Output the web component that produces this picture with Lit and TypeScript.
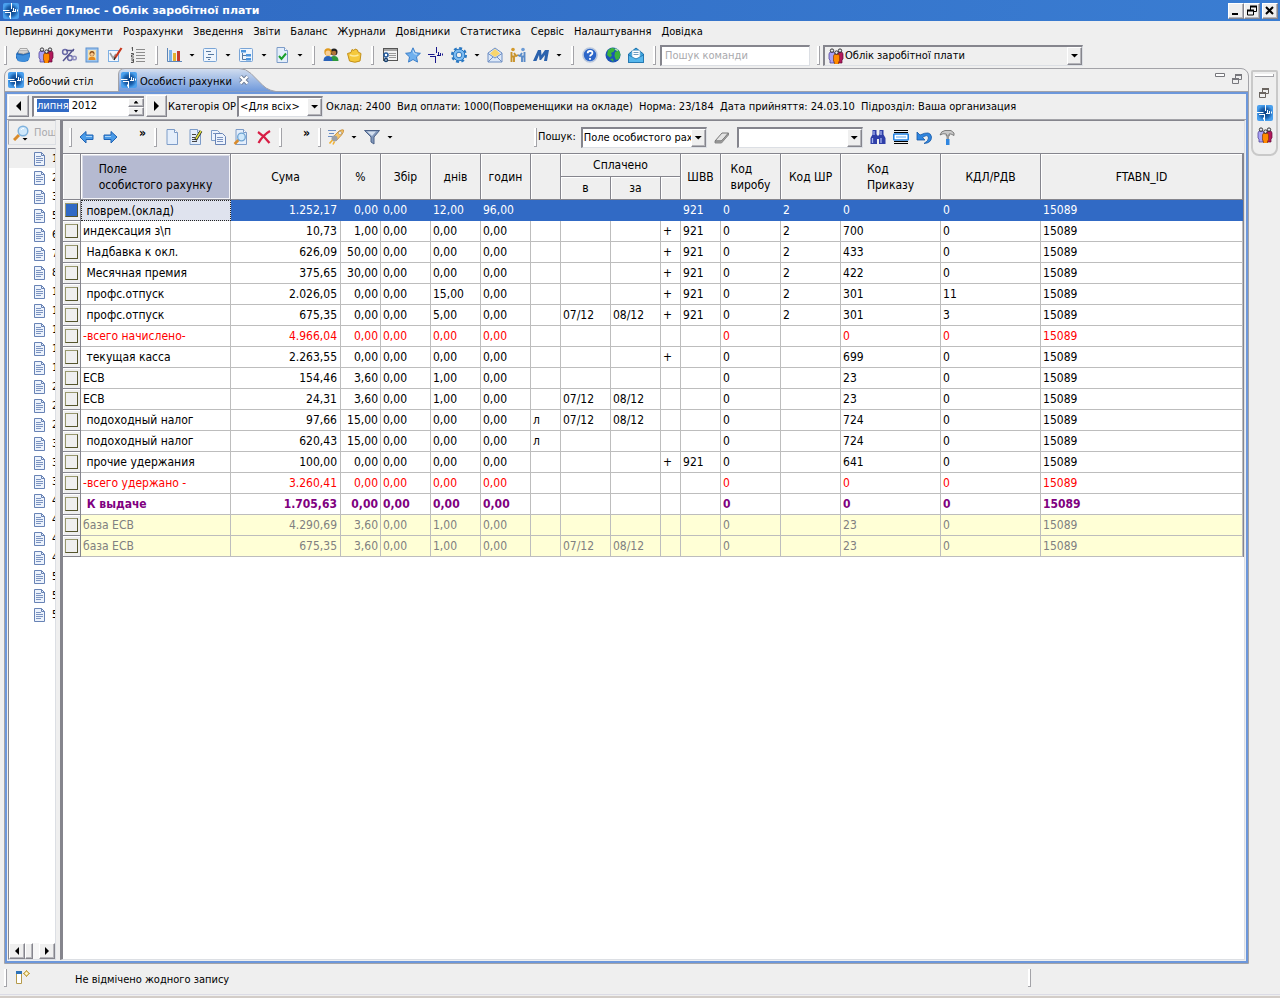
import { LitElement, html, svg, css, nothing } from "lit";
import { customElement, property, query } from "lit/decorators.js";
import { classMap } from "lit/directives/class-map.js";

const person = (x: number, y: number, c: string, d: string) => svg`
  <path d="M${x} ${y + 5}q0-2 2.5-2h1q2.5 0 2.5 2v5l-1 1v3h-4v-3l-1-1z" fill=${c} stroke=${d} stroke-width=".7"/>
  <circle cx=${x + 3} cy=${y + 1.6} r="1.7" fill="#e8e8f0" stroke="#222" stroke-width=".9"/>`;

const page = svg`<path d="M3 .5h7.5l3 3v12H3z" fill="#e4eefb" stroke="#7d9cc8"/><path d="M10.5.5v3h3" fill="#fff" stroke="#7d9cc8"/>`;

const glyphs: Record<string, unknown> = {
  logo: svg`<defs><radialGradient id="lg"><stop offset="0" stop-color="#0d3f80"/><stop offset=".6" stop-color="#1c61ad"/><stop offset="1" stop-color="#4aa0ee"/></radialGradient></defs>
    <rect width="16" height="16" rx="2" fill="url(#lg)"/>
    <path d="M8.500 0v6M0 7.500h6.500M2 9.500h5M7.500 9v7M10.500 5v4M9 8.500h4M12.500 6v2M14.500 6.500v2M6.500 12.500v2" stroke="#fff" fill="none"/>`,
  box: svg`<path d="M1 7l3-4h9l2 3v3l-2 5-4 1-6-1-2-3z" fill="#1f68b8"/><path d="M1 7.500l7 1 7-2-1 6-5 2.500-6-1z" fill="#3f8fdc"/><path d="M3 6l2-4.500h7l1.500 4-5 1.500z" fill="#e9e9e9" stroke="#8a8a8a" stroke-width=".7"/><path d="M5 3.500h7M4.500 5h8" stroke="#999" stroke-width=".6"/>`,
  people: svg`${person(1, 1, "#a9a3f5", "#43308e")}${person(9, 1, "#b3195b", "#5e0a3a")}${person(5.5, 3, "#ff8a00", "#8b3b00")}`,
  percent: svg`<g fill="none" stroke-width="1.500"><circle cx="4" cy="5" r="2.400" stroke="#6a6aa8"/><circle cx="9" cy="11" r="2.400" stroke="#6a6aa8"/><circle cx="13.500" cy="11" r="1.800" stroke="#8f8fc0"/><path d="M2 14L13 2M5 3.500h8" stroke="#55558f"/></g>`,
  badge: svg`<rect x="2" y="1" width="12" height="14" fill="#9cc3ec" stroke="#5d92cf"/><rect x="4" y="3" width="8" height="10" fill="#f4e2b0"/><circle cx="8" cy="6.500" r="2.500" fill="#8b4a14"/><circle cx="8" cy="7.300" r="1.700" fill="#f7c68a"/><path d="M4.500 13q0-3.500 3.500-3.500t3.500 3.500z" fill="#e58b1f"/>`,
  checkEdit: svg`<rect x="1.500" y="3.500" width="10" height="11" fill="#f4f8fd" stroke="#7db0e4"/><path d="M3 6l3 5 3-4" fill="none" stroke="#9a9a9a" stroke-width="1.600"/><path d="M14.500 1L8 11" stroke="#c8371c" stroke-width="2.200"/><path d="M8.300 10.400L7 13" stroke="#222" stroke-width="1.400"/>`,
  list: svg`<path d="M6 2.500h9M6 5.500h9M6 8.500h9M6 11.500h9M6 14.500h9" stroke="#8c8c8c"/><path d="M2.500 0v4M1.500 1h1M1 6.500h2.500v1.500h-2v2H4M1 12h2.500v3.500H1M1.500 13.700h2" stroke="#555" fill="none"/>`,
  chart: svg`<path d="M1.500 1v13.500H16" stroke="#5d86b8" fill="none"/><rect x="3" y="3" width="3" height="11" fill="#7db4ea"/><rect x="7" y="6" width="3" height="8" fill="#e3b12e"/><rect x="11" y="4" width="3" height="10" fill="#c43a2c"/>`,
  form: svg`<rect x="1.500" y="1.500" width="13" height="13" rx="1" fill="#eef5fd" stroke="#7aa5d6"/><path d="M4 4.500h5M6 7.500h6M4 10.500h5M6 12.500h2" stroke="#56789f"/>`,
  tree: svg`<rect x="1.500" y="1.500" width="13" height="13" rx="1" fill="#eef5fd" stroke="#7aa5d6"/><path d="M4.500 6v6.500H8M4.500 8.500H8" stroke="#56789f" fill="none"/><rect x="3" y="3" width="5" height="2.500" fill="#4b94dd"/><rect x="8" y="7" width="5" height="2.500" fill="#4b94dd"/><rect x="8" y="11" width="5" height="2.500" fill="#4b94dd"/>`,
  docCheck: svg`${page}<path d="M5 9l2.500 3L12 6.500" stroke="#19a02b" stroke-width="2" fill="none"/>`,
  users: svg`<circle cx="11" cy="5" r="3.500" fill="#222"/><circle cx="11" cy="6" r="2.300" fill="#b0753a"/><path d="M6.500 14q0-5 4.500-5t4.500 5z" fill="#2d9a3c"/><circle cx="5" cy="5" r="3.700" fill="#e09a1f"/><circle cx="5" cy="6" r="2.500" fill="#f8cf96"/><path d="M.5 14q0-5 4.500-5t4.500 5z" fill="#2a62b8"/>`,
  folder: svg`<path d="M1.500 6.500l3.500-1 1-3 2 1 1-1.500 2.500 1 .5 2 3 1.500-1 7.500q-5 2.500-10.500 0z" fill="#f5c93c" stroke="#c3901a"/><path d="M4 8q4 2 8.500 0" stroke="#fdeb9c" stroke-width="1.500" fill="none"/>`,
  gridCfg: svg`<rect x="1.500" y="1.500" width="14" height="12" fill="#f2f2f2" stroke="#555"/><path d="M2 3h13" stroke="#555" stroke-width="1"/><path d="M7 6.500h7M7 8.500h7M7 10.500h7" stroke="#999"/><circle cx="4" cy="8" r="2" fill="#fff" stroke="#245a9c" stroke-width="1.600"/><circle cx="4" cy="13" r="1.500" fill="#fff" stroke="#17406f" stroke-width="1.400"/>`,
  star: svg`<path d="M8 .8l2.200 4.900 5.200.6-3.900 3.600 1 5.200L8 12.500l-4.500 2.600 1-5.200L.6 6.300l5.200-.6z" fill="#6fb0ee" stroke="#3c7fc9"/><path d="M8 3.500l1.300 3.300L12 7.200" stroke="#cbe4fb" fill="none"/>`,
  cross: svg`<path d="M8.500 0v6M0 7.500h6.500M2 9.500h5M7.500 9v7M10.500 5v4M9 8.500h4M12.500 6v2M14.500 6.500v2" stroke="#000080" fill="none" stroke-width=".9"/>`,
  gear: svg`<circle cx="8" cy="8" r="6.800" fill="none" stroke="#2a78c2" stroke-width="2.400" stroke-dasharray="2.900 2.440"/><circle cx="8" cy="8" r="5.800" fill="#7fbdf2" stroke="#2a78c2"/><circle cx="8" cy="8" r="2.800" fill="#f0f0f0" stroke="#2a78c2"/>`,
  mail: svg`<path d="M1 6l7-5 7 5v9H1z" fill="#dce8f8" stroke="#6e8fc4"/><path d="M3 6.500L8 2l5 4.500L8 10z" fill="#f8d56b"/><path d="M1 6.500l7 4.500 7-4.500M1 15l5-5M15 15l-5-5" stroke="#6e8fc4" fill="none"/>`,
  hands: svg`<circle cx="3" cy="2.500" r="1.800" fill="#d49a2c"/><path d="M1.500 5v10M4 6l2 3 2-1M1.500 9.500H4V15" fill="none" stroke="#c8922a" stroke-width="1.900"/><circle cx="13" cy="2.500" r="1.800" fill="#6b9bd6"/><path d="M14.500 5v10M12 6l-2 3-2-1M14.500 9.500H12V15" fill="none" stroke="#5a8bc8" stroke-width="1.900"/>`,
  em: svg`<path d="M0 14L5 3h3l.5 5L12 3h4l-2 11h-3l1-6-4 5H6.500L6 8l-2.500 6z" fill="#2b62ad"/>`,
  help: svg`<circle cx="8" cy="8" r="7" fill="#2c66c9" stroke="#b9c7dd" stroke-width="1.600"/><path d="M5.700 6.300q0-2.300 2.400-2.300t2.300 2q0 1.300-1.300 1.900-1 .5-1 1.500M8 11v1.800" stroke="#fff" stroke-width="1.800" fill="none"/>`,
  globe: svg`<circle cx="8" cy="8" r="7.500" fill="#1c54b5"/><path d="M3 3l4-2.300 3 1L9 4.500 6 6l1 2.500-2 2L2 8zM10 5l4-1.500 1.500 4L14 12l-3 1-1.500-4zM5 12l3-.5.500 3.500z" fill="#3bb53b"/><path d="M10 2l3 1.500" stroke="#a8e8a8" stroke-width="1.500"/>`,
  mailBlue: svg`<path d="M.5 7L8 1l7.500 6v8.500H.5z" fill="#3aa0dc" stroke="#1c6fa8"/><rect x="4" y="3.500" width="8" height="8" fill="#fff" stroke="#8fb9d6" stroke-width=".7"/><path d="M5.500 5.500h5M5.500 7.500h5" stroke="#6f9cc0"/><path d="M.5 8L8 12l7.500-4v7.500H.5z" fill="#55b6ec" stroke="#1c6fa8" stroke-width=".7"/>`,
  search: svg`<path d="M1 15l5-5" stroke="#d98b2b" stroke-width="3"/><circle cx="10" cy="6" r="4.800" fill="#cfe8fb" stroke="#7fb2dd" stroke-width="1.500"/><path d="M8 5q1-2 3-1.500" stroke="#fff" fill="none"/>`,
  doc: svg`<path d="M2.500 1.500h7l3 3v10h-10z" fill="#edf3fc" stroke="#6883b5"/><path d="M9.500 1.500v3h3" fill="none" stroke="#6883b5"/><path d="M4 5.500h5M4 7.500h7M4 9.500h7M4 11.500h5" stroke="#7b93c0"/>`,
  back: svg`<path d="M1 8l6-5.500v3.500h7v4.500H7V14z" fill="#4a9be8" stroke="#1f62b3" stroke-linejoin="round"/><path d="M7 7.500h6" stroke="#a9d4fa"/>`,
  next: svg`<path d="M15 8L9 2.500V6H2v4.500h7V14z" fill="#4a9be8" stroke="#1f62b3" stroke-linejoin="round"/><path d="M3 7.500h6" stroke="#a9d4fa"/>`,
  blank: page,
  edit: svg`${page}<path d="M5 5.500h4M5 8.500h3M5 10.500h3M5 12.500h5" stroke="#444"/><path d="M14 2L8.500 11" stroke="#222" stroke-width="3"/><path d="M14 2L9 10" stroke="#dfe03a" stroke-width="1.500"/>`,
  copy: svg`<path d="M1.500 1.500h6l2 2v8h-8z" fill="#edf3fc" stroke="#7d9cc8"/><path d="M5.500 4.500h7l3 3v8h-10z" fill="#edf3fc" stroke="#6883b5"/><path d="M7 8.500h6M7 10.500h6M7 12.500h6M3 4.500h3" stroke="#7b93c0"/>`,
  preview: svg`${page}<path d="M1.500 15l4-4" stroke="#d98b2b" stroke-width="2.500"/><circle cx="8.500" cy="8" r="3.800" fill="#cfe8fb" stroke="#6da3d2" stroke-width="1.300"/>`,
  del: svg`<path d="M2 3q6 4 11.500 11M14 2Q7 6 2.500 14" stroke="#d81e45" stroke-width="2.200" fill="none"/>`,
  rocket: svg`<path d="M0 1.500h8M1 4.500h5M0 7.500h5" stroke="#6c8fc4"/><path d="M5 8L11 2q4-2 4.500-1 .5 2-2 5L8 12z" fill="#f6c66a" stroke="#c4842a" stroke-width=".8"/><circle cx="12" cy="4" r="1.500" fill="#fff" stroke="#888" stroke-width=".6"/><circle cx="6.500" cy="9.500" r="3" fill="#9aa0aa"/><path d="M4.500 11l-3 3.500M6.500 12.500L5 15.500" stroke="#f0b030" stroke-width="1.600"/>`,
  funnel: svg`<path d="M.5 1.500h15L10 8v7l-3-2V8z" fill="#8298bb" stroke="#4c6288"/><path d="M3 2.500h9L8 7z" fill="#d4dfee"/>`,
  eraser: svg`<path d="M1 12l7-8h6.500l-7 8z" fill="#e3e3e3" stroke="#777"/><path d="M1 12v2h6.500l7-8V4l-7 8z" fill="#a8a8a8" stroke="#777" stroke-width=".8"/>`,
  binoc: svg`<path d="M2.500 1h4v4l.7 1.500h1.600L9.500 5V1h4v4.500l2 3.500v6H9v-5H7v5H.5V9l2-3.500z" fill="#2f3fa8"/><path d="M4 2v4M11 2v4M2.500 9v5M11 9v5" stroke="#a6b3f0" stroke-width="1.300"/>`,
  rows: svg`<path d="M1 1.500h14M1 3.500h14M1 12.500h14M1 14.500h14" stroke="#000"/><rect x=".75" y="5" width="14.500" height="6" rx="1" fill="#fff" stroke="#1f7fe0" stroke-width="1.600"/><rect x="3" y="7" width="10" height="2" fill="#a9d2fa"/>`,
  undo: svg`<path d="M1 3v8h8L6.500 8.500Q12 4.500 12.500 9q0 3-4.500 5.500 7.500-.5 7.500-6.500Q14.500 1 4 6z" fill="#2f86e0" stroke="#1557a6" stroke-width=".8"/>`,
  hammer: svg`<path d="M1 6q1-4 5-4.500h6l3 2.500v2.500L12 5h-2l.3 2h-3V5Q4 4 1 6z" fill="#c9c9c9" stroke="#666" stroke-width=".8"/><path d="M7.500 7h2.500v3H7.500z" fill="#999"/><path d="M7 10h3.500v6H7z" fill="#2f86e0"/>`,
  view: svg`<path d="M1.500 5v9.500h5V5" fill="#fff" stroke="#b59a4b"/><path d="M1 3.500h6" stroke="#2f73b8" stroke-width="3"/><path d="M11.500 1.500l1.200 1.800 1.800 1.200-1.800 1.200-1.200 1.800-1.200-1.800L8.500 4.500l1.800-1.200z" fill="#fff6c8" stroke="#b58a14"/>`,
  restore: svg`<path d="M3.500 2v4.500h6V2M.5 6v4.500h6V6" fill="none" stroke="currentColor"/><path d="M3 2h7M0 6h7" stroke="currentColor" stroke-width="2"/>`,
};

@customElement("ui-icon")
class UiIcon extends LitElement {
  @property() name = "";
  static styles = css`
    :host { display: block; flex: none; width: 16px; height: 16px; }
    svg { display: block; width: 100%; height: 100%; }
  `;
  render() {
    return html`<svg viewBox="0 0 16 16" aria-hidden="true">${glyphs[this.name]}</svg>`;
  }
}

type Row = { c: string[]; kind?: string };
const rows: Row[] = [
  { kind: "sel", c: [" поврем.(оклад)", "1.252,17", "0,00", "0,00", "12,00", "96,00", "", "", "", "", "921", "0", "2", "0", "0"] },
  { c: ["индексация з\\п", "10,73", "1,00", "0,00", "0,00", "0,00", "", "", "", "+", "921", "0", "2", "700", "0"] },
  { c: [" Надбавка к окл.", "626,09", "50,00", "0,00", "0,00", "0,00", "", "", "", "+", "921", "0", "2", "433", "0"] },
  { c: [" Месячная премия", "375,65", "30,00", "0,00", "0,00", "0,00", "", "", "", "+", "921", "0", "2", "422", "0"] },
  { c: [" профс.отпуск", "2.026,05", "0,00", "0,00", "15,00", "0,00", "", "", "", "+", "921", "0", "2", "301", "11"] },
  { c: [" профс.отпуск", "675,35", "0,00", "0,00", "5,00", "0,00", "", "07/12", "08/12", "+", "921", "0", "2", "301", "3"] },
  { kind: "red", c: ["-всего начислено-", "4.966,04", "0,00", "0,00", "0,00", "0,00", "", "", "", "", "", "0", "", "0", "0"] },
  { c: [" текущая касса", "2.263,55", "0,00", "0,00", "0,00", "0,00", "", "", "", "+", "", "0", "", "699", "0"] },
  { c: ["ЕСВ", "154,46", "3,60", "0,00", "1,00", "0,00", "", "", "", "", "", "0", "", "23", "0"] },
  { c: ["ЕСВ", "24,31", "3,60", "0,00", "1,00", "0,00", "", "07/12", "08/12", "", "", "0", "", "23", "0"] },
  { c: [" подоходный налог", "97,66", "15,00", "0,00", "0,00", "0,00", "л", "07/12", "08/12", "", "", "0", "", "724", "0"] },
  { c: [" подоходный налог", "620,43", "15,00", "0,00", "0,00", "0,00", "л", "", "", "", "", "0", "", "724", "0"] },
  { c: [" прочие удержания", "100,00", "0,00", "0,00", "0,00", "0,00", "", "", "", "+", "921", "0", "", "641", "0"] },
  { kind: "red", c: ["-всего удержано -", "3.260,41", "0,00", "0,00", "0,00", "0,00", "", "", "", "", "", "0", "", "0", "0"] },
  { kind: "total", c: [" К выдаче", "1.705,63", "0,00", "0,00", "0,00", "0,00", "", "", "", "", "", "0", "", "0", "0"] },
  { kind: "base", c: ["база ЕСВ", "4.290,69", "3,60", "0,00", "1,00", "0,00", "", "", "", "", "", "0", "", "23", "0"] },
  { kind: "base", c: ["база ЕСВ", "675,35", "3,60", "0,00", "1,00", "0,00", "", "07/12", "08/12", "", "", "0", "", "23", "0"] },
];

const menu = ["Первинні документи", "Розрахунки", "Зведення", "Звіти", "Баланс", "Журнали", "Довідники", "Статистика", "Сервіс", "Налаштування", "Довідка"];
const tools: string[][] = [
  ["box", "people", "percent", "badge", "checkEdit", "list"],
  ["chart+", "form+", "tree+", "docCheck+"],
  ["users", "folder"],
  ["gridCfg", "star", "cross", "gear+", "mail", "hands", "em+"],
  ["help", "globe", "mailBlue"],
];
const accounts = "1235678111112223334444555".split("");
const widths = [18, 150, 110, 40, 50, 50, 50, 30, 50, 50, 20, 40, 60, 60, 100, 100];

const tool = (spec: string) => {
  const drop = spec.endsWith("+");
  const name = drop ? spec.slice(0, -1) : spec;
  return html`<button class="tool" aria-label=${name}><ui-icon name=${name}></ui-icon>${drop ? html`<i class="drop"></i>` : nothing}</button>`;
};
const head = (a: string, b = "") => html`<span class="cap">${a}${b ? html`<br />${b}` : nothing}</span>`;

@customElement("app-root")
class AppRoot extends LitElement {
  @query(".period") period!: HTMLInputElement;

  firstUpdated() {
    this.period.focus();
    this.period.setSelectionRange(0, 5);
  }

  static styles = css`
    :host {
      display: flex; flex-direction: column; height: 100vh; overflow: hidden;
      background: #efefef; color: #000;
      font: 11px/14px "DejaVu Sans Condensed", "DejaVu Sans", sans-serif;
      --edge: #85858d; --line: #a3a3a8; --blue: #6c97db;
    }
    * { box-sizing: border-box; }
    button, input, select { font: inherit; color: inherit; margin: 0; padding: 0; border: 0; border-radius: 0; background: none; outline: none; }
    select { appearance: none; }
    button { display: flex; align-items: center; justify-content: center; }
    .title { display: flex; align-items: center; flex: none; height: 21px; padding: 0 2px 0 3px; color: #fff; background: linear-gradient(90deg, #2f69c2, #3a7dd2); }
    .title h1 { flex: 1; margin: 0 0 0 4px; font: bold 11px/14px "DejaVu Sans", sans-serif; }
    .raised { background: #efefef; border: 1px solid; border-color: #fff var(--edge) var(--edge) #fff; box-shadow: inset -1px -1px 0 #b5b5ba; }
    .win { width: 16px; height: 16px; color: #000; }
    .win.last { margin-left: 2px; }
    .win svg { width: 12px; height: 12px; }
    .menu { display: flex; flex: none; gap: 10px; height: 21px; padding: 0 5px; align-items: center; }
    .menu button { white-space: nowrap; }
    .bar { display: flex; align-items: center; }
    .main-bar { flex: none; height: 26px; padding-left: 4px; }
    .group { display: flex; align-items: center; gap: 7px; padding-right: 9px; }
    .grip { flex: none; width: 3px; height: 19px; border: solid var(--line); border-width: 0 1px 1px 0; background: #fff; }
    .group .grip { margin-right: 1px; }
    .tool { gap: 7px; flex: none; }
    .drop { width: 6px; height: 3px; background: #000; clip-path: polygon(0 0, 100% 0, 50% 100%); }
    .sunk { display: flex; align-items: center; height: 21px; background: #fff; border: solid; border-width: 2px 1px 1px 2px; border-color: var(--edge) #dcdfe4 #dcdfe4 var(--edge); }
    .sunk > input, .sunk > select { flex: 1; min-width: 0; height: 100%; padding-left: 3px; }
    .sunk > select { overflow: hidden; padding-left: 1px; }
    .sunk > .raised { flex: none; width: 15px; height: 100%; }
    .cmd { width: 150px; margin: 0 7px 0 4px; }
    .cmd input::placeholder { color: #a9a9ad; opacity: 1; }
    .persp { width: 260px; margin-left: 3px; padding-left: 3px; background: #efefef; }
    .main { display: flex; flex: 1; min-height: 0; gap: 2px; padding: 0 2px 0 4px; }
    .folder { display: flex; flex-direction: column; flex: 1; min-width: 0; border: 1px solid var(--line); border-radius: 8px 8px 0 0; }
    .tabs { display: flex; flex: none; height: 23px; border-bottom: 1px solid var(--line); }
    .tab { position: relative; display: flex; align-items: center; gap: 3px; height: 22px; padding-left: 3px; }
    .tab span { padding-top: 3px; }
    .tab.idle { width: 113px; }
    .tab.on { width: 165px; }
    .tab.on > svg.shape { position: absolute; left: 0; top: -1px; width: 165px; height: 24px; }
    .tab.on > ui-icon, .tab.on > span, .tab.on > button { position: relative; }
    .tab .x { width: 12px; height: 12px; margin-left: 3px; }
    .tab-tools { display: flex; gap: 5px; margin-left: auto; padding: 4px 4px 0 0; color: #77777c; }
    .tab-tools button { height: 12px; align-items: flex-start; }
    .tab-tools svg { width: 12px; height: 12px; }
    .body { display: flex; flex-direction: column; flex: 1; min-height: 0; border: 2px solid var(--blue); }
    .filter { flex: none; height: 26px; padding: 0 0 1px 1px; border-bottom: 1px solid var(--line); white-space: pre; }
    .step { width: 21px; height: 22px; }
    .spin { width: 112px; margin: 0 2px 0 3px; border-right-width: 0; }
    .period::selection { background: #316ac5; color: #fff; }
    .period { padding-bottom: 2px; }
    .ud { display: flex; flex-direction: column; flex: none; width: 16px; height: 100%; background: #efefef; }
    .ud .raised { flex: 1; width: 100%; }
    .left, .right { width: 5px; height: 10px; background: #000; }
    .left { clip-path: polygon(100% 0, 100% 100%, 0 50%); }
    .right { clip-path: polygon(0 0, 0 100%, 100% 50%); }
    .up { width: 5px; height: 3px; background: #000; clip-path: polygon(50% 0, 100% 100%, 0 100%); }
    .dn { width: 8px; height: 4px; background: #000; clip-path: polygon(0 0, 100% 0, 50% 100%); }
    .dn.s { width: 5px; height: 3px; }
    .cat { width: 86px; margin: 0 3px 0 1px; }
    .filter label, .filter > span { padding-top: 2px; }
    .filter label { margin-left: 1px; }
    .split { display: flex; flex: 1; min-height: 0; gap: 4px; padding: 0 1px 1px; }
    .side { display: flex; flex-direction: column; flex: none; width: 48px; }
    .find { display: flex; flex: none; height: 25px; padding-left: 4px; gap: 2px; align-items: center; overflow: hidden; border: 1px solid var(--line); border-color: var(--line) #dcdfe4 #dcdfe4 var(--line); color: #a9a9ad; }
    .find label { position: relative; flex: none; }
    .find .drop { position: absolute; left: 9px; top: 13px; }
    .find input { width: 60px; padding-left: 3px; flex: none; }
    .find input::placeholder { color: #a9a9ad; opacity: 1; }
    .tree { display: flex; flex-direction: column; flex: 1; margin-top: 3px; min-height: 0; overflow: hidden; background: #fff; border: 1px solid; border-color: var(--edge) #dcdfe4 #dcdfe4 var(--edge); }
    .tree ul { flex: 1; min-height: 0; margin: 0; padding: 0; list-style: none; overflow: hidden; }
    .tree li { display: flex; align-items: center; gap: 4px; height: 19px; padding-left: 23px; }
    .tree li:first-child { background: #efefef; }
    .hbar { display: flex; flex: none; height: 16px; background: #f6f6f6; }
    .hbar .raised { width: 16px; }
    .hbar .thumb { width: 8px; margin-right: auto; }
    .hbar .left, .hbar .right { width: 4px; height: 8px; }
    .panel { display: flex; flex-direction: column; flex: 1; min-width: 0; border: solid; border-width: 1px 1px 1px 3px; border-color: var(--edge) #dcdfe4 #dcdfe4 var(--edge); background: #fff; }
    .panel-bar { flex: none; height: 32px; background: #efefef; padding-left: 6px; }
    .near { display: flex; align-items: center; gap: 7px; flex: none; width: 465px; }
    .more { font-weight: bold; font-size: 12px; width: 9px; padding-bottom: 8px; }
    .near .more { margin-left: 13px; }
    .far { display: flex; align-items: center; gap: 7px; }
    .far label { margin: 0 -2px 0 -6px; white-space: nowrap; }
    .field { width: 126px; }
    table { width: 100%; table-layout: fixed; border-collapse: separate; border-spacing: 0; border-right: 1px solid var(--edge); font-size: 12px; line-height: 16px; }
    th { font-weight: normal; padding: 0; height: 23px; background: #efefef; border: solid var(--edge); border-width: 0 1px 1px 0; box-shadow: inset 1px 1px 0 #fff; white-space: nowrap; overflow: hidden; }
    thead tr:first-child th { border-top-width: 1px; height: 24px; }
    .cap { display: inline-block; text-align: left; }
    th.cur { background: #b5bad1; box-shadow: inset 1px 1px 0 #fff, inset 2px 2px 0 #d9dbe6, inset -1px -1px 0 #f4f4f8; }
    td { height: 21px; padding: 0 3px 0 2px; border: solid #bdbdbd; border-width: 0 1px 1px 0; white-space: pre; overflow: hidden; }
    td.num { text-align: right; }
    td.num.pct { padding-right: 2px; }
    td.mark { padding: 0; background: #efefef; border-color: var(--edge); box-shadow: inset 1px 1px 0 #fff; }
    td.mark input { appearance: none; display: block; width: 13px; height: 14px; margin: 0 auto; background: #efefef; border: 1px solid; border-color: #98986e #55552c #55552c #98986e; }
    .sel td { color: #fff; background: #316ac5; border-color: #316ac5; }
    .sel td.mark { background: #efefef; border-color: var(--edge); }
    .sel td.mark input { background: #316ac5; }
    .sel td.name { color: #000; background: #dfe3ee; border: 1px dotted #222; padding-left: 1px; }
    .red td { color: #f00; }
    .total td { color: #800080; font-weight: bold; }
    .base td { color: #808080; background: #ffffd6; }
    .base td.mark { background: #efefef; }
    .trim { display: flex; flex-direction: column; align-items: center; flex: none; align-self: flex-start; gap: 6px; width: 27px; height: 86px; margin-top: 2px; padding-top: 2px; border: 2px solid #c9c9c9; border-radius: 2px 2px 8px 8px; }
    .trim hr { width: 19px; height: 3px; margin: 0 0 4px; border: solid var(--line); border-width: 0 1px 1px 0; background: #fff; }
    .trim svg.r { width: 12px; height: 12px; color: #6b6560; }
    .status { display: flex; flex: none; height: 34px; padding: 5px 0 0 4px; border-bottom: 2px solid #d3cdc8; background: linear-gradient(#dcdce6, #dcdce6) 0 30px / 100% 1px no-repeat; }
    .status .grip { height: 18px; }
    .status ui-icon { margin-left: 8px; }
    .status p { flex: 1; margin: 4px 0 0 44px; }
    .status .grip.end { margin-right: 249px; }
  `;

  render() {
    return html`
      <header class="title">
        <ui-icon name="logo"></ui-icon>
        <h1>Дебет Плюс - Облік заробітної плати</h1>
        <button class="win raised" aria-label="Згорнути"><svg viewBox="0 0 12 12"><path d="M2 9h6" stroke="#000" stroke-width="2" /></svg></button>
        <button class="win raised" aria-label="Відновити"><svg viewBox="0 0 12 12"><path d="M4.500 2v3M4 1.500h6.500v5H8M1.500 5.500h6v4.500h-6z" fill="none" stroke="#000" /><path d="M4 1.500h7M1 5.500h7" stroke="#000" stroke-width="2" /></svg></button>
        <button class="win last raised" aria-label="Закрити"><svg viewBox="0 0 12 12"><path d="M2 2l7 7M9 2l-7 7" stroke="#000" stroke-width="2" /></svg></button>
      </header>
      <nav class="menu">${menu.map((m) => html`<button>${m}</button>`)}</nav>
      <div class="bar main-bar">
        ${tools.map((g) => html`<div class="group"><span class="grip"></span>${g.map(tool)}</div>`)}
        <span class="grip"></span>
        <div class="sunk cmd"><input aria-label="Пошук команди" placeholder="Пошук команди" /></div>
        <span class="grip"></span>
        <div class="sunk persp"><ui-icon name="people"></ui-icon><select aria-label="Перспектива"><option>Облік заробітної плати</option></select><button class="raised" tabindex="-1" aria-label="Список"><i class="dn"></i></button></div>
      </div>
      <main class="main">
        <section class="folder">
          <div class="tabs">
            <div class="tab idle"><ui-icon name="logo"></ui-icon><span>Робочий стіл</span></div>
            <div class="tab on">
              <svg class="shape" viewBox="0 0 165 24"><defs><linearGradient id="tg" x2="0" y2="1"><stop offset="0" stop-color="#d3deef" /><stop offset="1" stop-color="#6c97db" /></linearGradient></defs><path d="M.5 24V6Q1 .5 7 .5H121q7 0 12 5l12 12q6 6 18 6.500z" fill="url(#tg)" stroke="#a3a3a8" /></svg>
              <ui-icon name="logo"></ui-icon><span>Особисті рахунки</span>
              <button class="x" aria-label="Закрити вкладку"><svg viewBox="0 0 12 12"><path d="M2.500 2.500l7 7M9.500 2.500l-7 7" stroke="#6d7b94" stroke-width="4" /><path d="M2.500 2.500l7 7M9.500 2.500l-7 7" stroke="#fff" stroke-width="2.400" /></svg></button>
            </div>
            <div class="tab-tools">
              <button aria-label="Згорнути панель"><svg viewBox="0 0 12 12"><path d="M.5.5h9v3h-9z" fill="#fff" stroke="currentColor" /></svg></button>
              <button aria-label="Відновити панель"><svg viewBox="0 0 12 12">${glyphs.restore}</svg></button>
            </div>
          </div>
          <div class="body">
            <div class="bar filter"><button class="step raised" aria-label="Попередній місяць"><i class="left"></i></button><div class="sunk spin"><input class="period" aria-label="Період" .value=${"липня 2012"} /><span class="ud"><button class="raised" aria-label="Більше"><i class="up"></i></button><button class="raised" aria-label="Менше"><i class="dn s"></i></button></span></div><button class="step raised" aria-label="Наступний місяць"><i class="right"></i></button><label for="cat">Категорія ОР</label><div class="sunk cat"><select id="cat"><option>&lt;Для всіх&gt;</option></select><button class="raised" tabindex="-1" aria-label="Список категорій"><i class="dn"></i></button></div><span>Оклад: 2400  Вид оплати: 1000(Повременщики на окладе)  Норма: 23/184  Дата прийняття: 24.03.10  Підрозділ: Ваша организация</span></div>
            <div class="split">
              <aside class="side">
                <div class="find"><label for="find"><ui-icon name="search"></ui-icon><i class="drop"></i></label><input id="find" aria-label="Пошук" placeholder="Пошук" /></div>
                <div class="tree">
                  <ul>${accounts.map((a) => html`<li><ui-icon name="doc"></ui-icon>${a}</li>`)}</ul>
                  <div class="hbar"><button class="raised" aria-label="Ліворуч"><i class="left"></i></button><span class="raised thumb"></span><button class="raised" aria-label="Праворуч"><i class="right"></i></button></div>
                </div>
              </aside>
              <section class="panel">
                <div class="bar panel-bar">
                  <div class="near"><span class="grip"></span>${tool("back")}${tool("next")}<button class="more">»</button><span class="grip"></span>${["blank", "edit", "copy", "preview", "del"].map(tool)}<span class="grip"></span><button class="more">»</button><span class="grip"></span>${tool("rocket+")}${tool("funnel+")}</div>
                  <div class="far"><span class="grip"></span><label for="field">Пошук:</label><div class="sunk field"><select id="field"><option>Поле особистого рахунку</option></select><button class="raised" tabindex="-1" aria-label="Список полів"><i class="dn"></i></button></div>${tool("eraser")}<div class="sunk field"><input aria-label="Значення пошуку" /><button class="raised" aria-label="Історія пошуку"><i class="dn"></i></button></div>${["binoc", "rows", "undo", "hammer"].map(tool)}</div>
                </div>
                <table>
                  <colgroup>${widths.map((w) => html`<col style="width:${w}px" />`)}<col /></colgroup>
                  <thead>
                    <tr>
                      <th rowspan="2"></th><th rowspan="2" class="cur">${head("Поле", "особистого рахунку")}</th><th rowspan="2">${head("Сума")}</th><th rowspan="2">${head("%")}</th><th rowspan="2">${head("Збір")}</th><th rowspan="2">${head("днів")}</th><th rowspan="2">${head("годин")}</th><th rowspan="2"></th>
                      <th colspan="3">${head("Сплачено")}</th>
                      <th rowspan="2">${head("ШВВ")}</th><th rowspan="2">${head("Код", "виробу")}</th><th rowspan="2">${head("Код ШР")}</th><th rowspan="2">${head("Код", "Приказу")}</th><th rowspan="2">${head("КДЛ/РДВ")}</th><th rowspan="2">${head("FTABN_ID")}</th>
                    </tr>
                    <tr><th>${head("в")}</th><th>${head("за")}</th><th></th></tr>
                  </thead>
                  <tbody>
                    ${rows.map((r) => html`<tr class=${r.kind ?? ""}><td class="mark"><input type="checkbox" aria-label=${r.c[0].trim()} /></td>${[...r.c, "15089"].map((v, i) => html`<td class=${classMap({ name: i === 0, num: i === 1 || i === 2, pct: i === 2 })}>${v}</td>`)}</tr>`)}
                  </tbody>
                </table>
              </section>
            </div>
          </div>
        </section>
        <aside class="trim"><hr /><svg class="r" viewBox="0 0 12 12">${glyphs.restore}</svg><ui-icon name="logo"></ui-icon><ui-icon name="people"></ui-icon></aside>
      </main>
      <footer class="status"><span class="grip"></span><ui-icon name="view"></ui-icon><p>Не відмічено жодного запису</p><span class="grip end"></span></footer>
    `;
  }
}
